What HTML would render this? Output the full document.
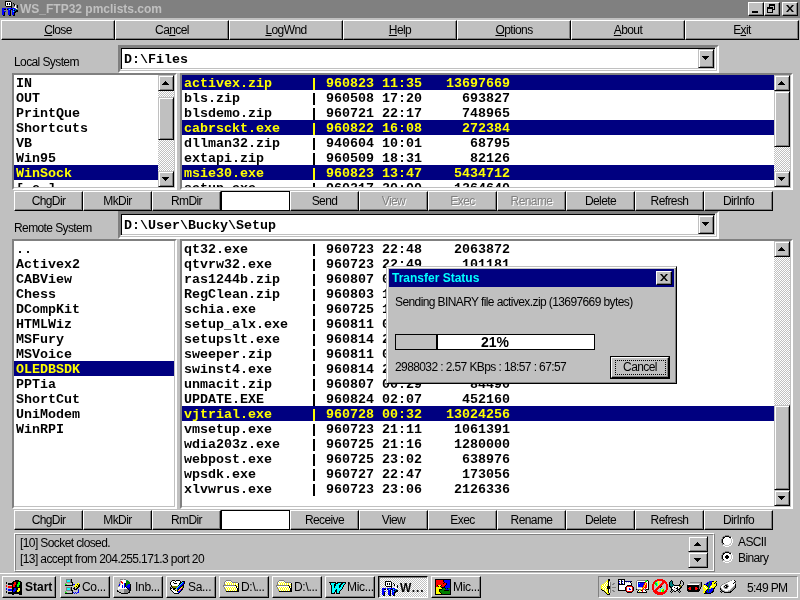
<!DOCTYPE html>
<html><head><meta charset="utf-8"><style>
html,body{margin:0;padding:0}
body{width:800px;height:600px;overflow:hidden;background:#c0c0c0;position:relative;font-family:"Liberation Sans",sans-serif}
div,span,svg{position:absolute;box-sizing:border-box}
.btn{background:#c0c0c0;border-top:1px solid #fff;border-left:1px solid #fff;border-right:1px solid #000;border-bottom:1px solid #000;box-shadow:inset -1px -1px #808080}
.btn span{left:0;right:0;text-align:center;line-height:17px}
.ui{font-size:12px;letter-spacing:-0.6px;color:#000;white-space:nowrap;line-height:16px}
.dis{color:#808080;text-shadow:1px 1px #fff}
.mono{font-family:"Liberation Mono",monospace;font-weight:bold;font-size:13.34px;letter-spacing:0;line-height:15px;padding-top:1px;white-space:pre;color:#000}
.sbtn{background:#c0c0c0;border-top:1px solid #c0c0c0;border-left:1px solid #c0c0c0;border-right:1px solid #000;border-bottom:1px solid #000;box-shadow:inset 1px 1px #fff,inset -1px -1px #808080}
.thumb{background:#c0c0c0;border-top:1px solid #c0c0c0;border-left:1px solid #c0c0c0;border-right:1px solid #000;border-bottom:1px solid #000;box-shadow:inset 1px 1px #fff,inset -1px -1px #808080}
.arr{width:8px;height:4px}
.arr.up{background:linear-gradient(#000,#000) 3px 0/1px 1px no-repeat,linear-gradient(#000,#000) 2px 1px/3px 1px no-repeat,linear-gradient(#000,#000) 1px 2px/5px 1px no-repeat,linear-gradient(#000,#000) 0 3px/7px 1px no-repeat}
.arr.dn{background:linear-gradient(#000,#000) 0 0/7px 1px no-repeat,linear-gradient(#000,#000) 1px 1px/5px 1px no-repeat,linear-gradient(#000,#000) 2px 2px/3px 1px no-repeat,linear-gradient(#000,#000) 3px 3px/1px 1px no-repeat}
u{text-decoration:underline}
</style></head><body>
<div style="left:0;top:0;width:800px;height:600px;background:#c0c0c0;overflow:hidden;will-change:transform">

<div style="left:0px;top:0px;width:800px;height:18px;background:#808080"></div>
<svg style="left:2px;top:1px;" width="16" height="15" viewBox="0 0 16 15" shape-rendering="crispEdges"><path fill="#000" d="M3 0h6v1h-6zM3 1h1v1h-1zM9 1h1v1h-1zM3 2h1v1h-1zM5 2h1v1h-1zM7 2h1v1h-1zM9 2h1v1h-1zM11 2h1v1h-1zM3 3h1v1h-1zM5 3h1v1h-1zM7 3h1v1h-1zM9 3h1v1h-1zM12 3h1v1h-1zM3 4h1v1h-1zM9 4h1v1h-1zM12 4h1v1h-1zM15 4h1v1h-1zM4 5h6v1h-6zM15 5h1v1h-1zM9 6h1v1h-1zM15 6h1v1h-1zM2 8h2v1h-2zM5 8h1v1h-1zM9 8h2v1h-2zM8 9h1v1h-1zM12 9h1v1h-1zM14 9h2v1h-2zM8 10h1v1h-1zM13 10h3v1h-3zM2 11h1v1h-1zM8 11h1v1h-1zM12 11h2v1h-2zM2 12h1v1h-1zM8 12h1v1h-1zM12 12h1v1h-1zM2 13h1v1h-1zM8 13h1v1h-1zM12 13h1v1h-1zM1 14h2v1h-2zM7 14h2v1h-2zM11 14h2v1h-2z"/><path fill="#fff" d="M4 1h5v1h-5zM4 2h1v1h-1zM6 2h1v1h-1zM8 2h1v1h-1zM4 3h1v1h-1zM6 3h1v1h-1zM8 3h1v1h-1zM4 4h5v1h-5zM13 4h1v1h-1zM13 5h1v1h-1zM12 6h2v1h-2zM14 7h1v1h-1z"/><path fill="#00f" d="M0 7h4v1h-4zM5 7h8v1h-8zM0 8h2v1h-2zM6 8h1v1h-1zM8 8h1v1h-1zM12 8h2v1h-2zM0 9h2v1h-2zM6 9h2v1h-2zM10 9h2v1h-2zM0 10h4v1h-4zM6 10h2v1h-2zM10 10h1v1h-1zM12 10h1v1h-1zM0 11h2v1h-2zM6 11h2v1h-2zM10 11h2v1h-2zM0 12h2v1h-2zM6 12h2v1h-2zM10 12h2v1h-2zM0 13h2v1h-2zM6 13h2v1h-2zM10 13h2v1h-2z"/><path fill="#0ff" d="M7 8h1v1h-1zM11 8h1v1h-1zM11 10h1v1h-1z"/><path fill="#008080" d="M14 8h1v1h-1zM13 9h1v1h-1z"/></svg>
<div class="ui" style="left:20px;top:1px;font-weight:bold;letter-spacing:0;color:#c0c0c0">WS_FTP32 pmclists.com</div>
<div class="btn" style="left:748px;top:2px;width:16px;height:14px"></div>
<div class="btn" style="left:764px;top:2px;width:16px;height:14px"></div>
<div class="btn" style="left:782px;top:2px;width:16px;height:14px"></div>
<div style="left:752px;top:11px;width:6px;height:2px;background:#000"></div>
<div style="left:769px;top:4px;width:6px;height:6px;border:1px solid #000;border-top-width:2px"></div>
<div style="left:767px;top:7px;width:6px;height:6px;border:1px solid #000;border-top-width:2px;background:#c0c0c0"></div>
<svg style="left:786px;top:5px" width="8" height="7" viewBox="0 0 8 7"><path d="M0 0h2l2 2.5 2-2.5h2l-3 3.5 3 3.5h-2l-2-2.5-2 2.5h-2l3-3.5z" fill="#000"/></svg>
<div class="btn" style="left:1px;top:20px;width:114px;height:20px">
<span class="ui" style="top:1px"><u>C</u>lose</span>
</div>
<div class="btn" style="left:115px;top:20px;width:114px;height:20px">
<span class="ui" style="top:1px">Ca<u>n</u>cel</span>
</div>
<div class="btn" style="left:229px;top:20px;width:114px;height:20px">
<span class="ui" style="top:1px"><u>L</u>ogWnd</span>
</div>
<div class="btn" style="left:343px;top:20px;width:114px;height:20px">
<span class="ui" style="top:1px"><u>H</u>elp</span>
</div>
<div class="btn" style="left:457px;top:20px;width:114px;height:20px">
<span class="ui" style="top:1px"><u>O</u>ptions</span>
</div>
<div class="btn" style="left:571px;top:20px;width:114px;height:20px">
<span class="ui" style="top:1px"><u>A</u>bout</span>
</div>
<div class="btn" style="left:685px;top:20px;width:114px;height:20px">
<span class="ui" style="top:1px">E<u>x</u>it</span>
</div>
<div class="ui" style="left:14px;top:54px;">Local System</div>
<div class="ui" style="left:14px;top:220px;">Remote System</div>
<div style="left:118px;top:45px;width:601px;height:28px;border-top:2px solid #808080;border-left:2px solid #808080;border-right:2px solid #fff;border-bottom:2px solid #fff;box-shadow:inset -1px -1px #c0c0c0"></div>
<div style="left:120px;top:47px;width:596px;height:23px;background:#fff;border-top:1px solid #808080;border-left:1px solid #808080;border-right:1px solid #fff;border-bottom:1px solid #fff;box-shadow:inset 1px 1px #000,inset -1px -1px #c0c0c0"></div>
<div class="mono" style="left:124px;top:51px;">D:\Files</div>
<div class="sbtn" style="left:698px;top:49px;width:16px;height:19px"><div class="arr dn" style="left:3px;top:6px"></div></div>
<div style="left:12px;top:73px;width:165px;height:117px;background:#fff;border-top:2px solid #808080;border-left:2px solid #808080;border-right:2px solid #fff;border-bottom:2px solid #fff;box-shadow:inset -1px -1px #c0c0c0"></div>
<div style="left:14px;top:75px;width:160px;height:112px;overflow:hidden">
<div class="mono" style="left:2px;top:0px;color:#000">IN</div>
<div class="mono" style="left:2px;top:15px;color:#000">OUT</div>
<div class="mono" style="left:2px;top:30px;color:#000">PrintQue</div>
<div class="mono" style="left:2px;top:45px;color:#000">Shortcuts</div>
<div class="mono" style="left:2px;top:60px;color:#000">VB</div>
<div class="mono" style="left:2px;top:75px;color:#000">Win95</div>
<div style="left:0px;top:90px;width:144px;height:15px;background:#000080"></div>
<div class="mono" style="left:2px;top:90px;color:#ff0">WinSock</div>
<div class="mono" style="left:2px;top:105px;color:#000">[-c-]</div>
</div>
<div style="left:158px;top:91px;width:16px;height:80px;background:conic-gradient(#fff 25%,#c0c0c0 0 50%,#fff 0 75%,#c0c0c0 0) 0 0/2px 2px"></div>
<div class="sbtn" style="left:158px;top:75px;width:16px;height:16px"><div class="arr up" style="left:3px;top:5px"></div></div>
<div class="sbtn" style="left:158px;top:171px;width:16px;height:16px"><div class="arr dn" style="left:3px;top:5px"></div></div>
<div class="thumb" style="left:158px;top:97px;width:16px;height:43px"></div>
<div style="left:180px;top:73px;width:613px;height:117px;background:#fff;border-top:2px solid #808080;border-left:2px solid #808080;border-right:2px solid #fff;border-bottom:2px solid #fff;box-shadow:inset -1px -1px #c0c0c0"></div>
<div style="left:182px;top:75px;width:608px;height:112px;overflow:hidden">
<div style="left:0px;top:0px;width:592px;height:15px;background:#000080"></div>
<div class="mono" style="left:2px;top:0px;color:#ff0">activex.zip</div>
<div style="left:131px;top:3px;width:2px;height:12px;background:#ff0"></div>
<div class="mono" style="left:144px;top:0px;color:#ff0">960823</div>
<div class="mono" style="left:200px;top:0px;color:#ff0">11:35</div>
<div class="mono" style="left:248px;top:0px;color:#ff0;width:80px;text-align:right">13697669</div>
<div class="mono" style="left:2px;top:15px;color:#000">bls.zip</div>
<div style="left:131px;top:18px;width:2px;height:12px;background:#000"></div>
<div class="mono" style="left:144px;top:15px;color:#000">960508</div>
<div class="mono" style="left:200px;top:15px;color:#000">17:20</div>
<div class="mono" style="left:248px;top:15px;color:#000;width:80px;text-align:right">693827</div>
<div class="mono" style="left:2px;top:30px;color:#000">blsdemo.zip</div>
<div style="left:131px;top:33px;width:2px;height:12px;background:#000"></div>
<div class="mono" style="left:144px;top:30px;color:#000">960721</div>
<div class="mono" style="left:200px;top:30px;color:#000">22:17</div>
<div class="mono" style="left:248px;top:30px;color:#000;width:80px;text-align:right">748965</div>
<div style="left:0px;top:45px;width:592px;height:15px;background:#000080"></div>
<div class="mono" style="left:2px;top:45px;color:#ff0">cabrsckt.exe</div>
<div style="left:131px;top:48px;width:2px;height:12px;background:#ff0"></div>
<div class="mono" style="left:144px;top:45px;color:#ff0">960822</div>
<div class="mono" style="left:200px;top:45px;color:#ff0">16:08</div>
<div class="mono" style="left:248px;top:45px;color:#ff0;width:80px;text-align:right">272384</div>
<div class="mono" style="left:2px;top:60px;color:#000">dllman32.zip</div>
<div style="left:131px;top:63px;width:2px;height:12px;background:#000"></div>
<div class="mono" style="left:144px;top:60px;color:#000">940604</div>
<div class="mono" style="left:200px;top:60px;color:#000">10:01</div>
<div class="mono" style="left:248px;top:60px;color:#000;width:80px;text-align:right">68795</div>
<div class="mono" style="left:2px;top:75px;color:#000">extapi.zip</div>
<div style="left:131px;top:78px;width:2px;height:12px;background:#000"></div>
<div class="mono" style="left:144px;top:75px;color:#000">960509</div>
<div class="mono" style="left:200px;top:75px;color:#000">18:31</div>
<div class="mono" style="left:248px;top:75px;color:#000;width:80px;text-align:right">82126</div>
<div style="left:0px;top:90px;width:592px;height:15px;background:#000080"></div>
<div class="mono" style="left:2px;top:90px;color:#ff0">msie30.exe</div>
<div style="left:131px;top:93px;width:2px;height:12px;background:#ff0"></div>
<div class="mono" style="left:144px;top:90px;color:#ff0">960823</div>
<div class="mono" style="left:200px;top:90px;color:#ff0">13:47</div>
<div class="mono" style="left:248px;top:90px;color:#ff0;width:80px;text-align:right">5434712</div>
<div class="mono" style="left:2px;top:105px;color:#000">setup.exe</div>
<div style="left:131px;top:108px;width:2px;height:12px;background:#000"></div>
<div class="mono" style="left:144px;top:105px;color:#000">960217</div>
<div class="mono" style="left:200px;top:105px;color:#000">20:00</div>
<div class="mono" style="left:248px;top:105px;color:#000;width:80px;text-align:right">1264640</div>
</div>
<div style="left:774px;top:91px;width:16px;height:80px;background:conic-gradient(#fff 25%,#c0c0c0 0 50%,#fff 0 75%,#c0c0c0 0) 0 0/2px 2px"></div>
<div class="sbtn" style="left:774px;top:75px;width:16px;height:16px"><div class="arr up" style="left:3px;top:5px"></div></div>
<div class="sbtn" style="left:774px;top:171px;width:16px;height:16px"><div class="arr dn" style="left:3px;top:5px"></div></div>
<div class="thumb" style="left:774px;top:91px;width:16px;height:56px"></div>
<div class="btn" style="left:14px;top:191px;width:69px;height:20px">
<span class="ui" style="top:1px">ChgDir</span>
</div>
<div class="btn" style="left:83px;top:191px;width:69px;height:20px">
<span class="ui" style="top:1px">MkDir</span>
</div>
<div class="btn" style="left:152px;top:191px;width:69px;height:20px">
<span class="ui" style="top:1px">RmDir</span>
</div>
<div style="left:221px;top:191px;width:69px;height:20px;background:#fff;border:1px solid #000"></div>
<div class="btn" style="left:290px;top:191px;width:69px;height:20px">
<span class="ui" style="top:1px">Send</span>
</div>
<div class="btn" style="left:359px;top:191px;width:69px;height:20px">
<span class="ui dis" style="top:1px">View</span>
</div>
<div class="btn" style="left:428px;top:191px;width:69px;height:20px">
<span class="ui dis" style="top:1px">Exec</span>
</div>
<div class="btn" style="left:497px;top:191px;width:69px;height:20px">
<span class="ui dis" style="top:1px">Rename</span>
</div>
<div class="btn" style="left:566px;top:191px;width:69px;height:20px">
<span class="ui" style="top:1px">Delete</span>
</div>
<div class="btn" style="left:635px;top:191px;width:69px;height:20px">
<span class="ui" style="top:1px">Refresh</span>
</div>
<div class="btn" style="left:704px;top:191px;width:69px;height:20px">
<span class="ui" style="top:1px">DirInfo</span>
</div>
<div class="btn" style="left:14px;top:510px;width:69px;height:20px">
<span class="ui" style="top:1px">ChgDir</span>
</div>
<div class="btn" style="left:83px;top:510px;width:69px;height:20px">
<span class="ui" style="top:1px">MkDir</span>
</div>
<div class="btn" style="left:152px;top:510px;width:69px;height:20px">
<span class="ui" style="top:1px">RmDir</span>
</div>
<div style="left:221px;top:510px;width:69px;height:20px;background:#fff;border:1px solid #000"></div>
<div class="btn" style="left:290px;top:510px;width:69px;height:20px">
<span class="ui" style="top:1px">Receive</span>
</div>
<div class="btn" style="left:359px;top:510px;width:69px;height:20px">
<span class="ui" style="top:1px">View</span>
</div>
<div class="btn" style="left:428px;top:510px;width:69px;height:20px">
<span class="ui" style="top:1px">Exec</span>
</div>
<div class="btn" style="left:497px;top:510px;width:69px;height:20px">
<span class="ui" style="top:1px">Rename</span>
</div>
<div class="btn" style="left:566px;top:510px;width:69px;height:20px">
<span class="ui" style="top:1px">Delete</span>
</div>
<div class="btn" style="left:635px;top:510px;width:69px;height:20px">
<span class="ui" style="top:1px">Refresh</span>
</div>
<div class="btn" style="left:704px;top:510px;width:69px;height:20px">
<span class="ui" style="top:1px">DirInfo</span>
</div>
<div style="left:118px;top:211px;width:601px;height:28px;border-top:2px solid #808080;border-left:2px solid #808080;border-right:2px solid #fff;border-bottom:2px solid #fff;box-shadow:inset -1px -1px #c0c0c0"></div>
<div style="left:120px;top:213px;width:596px;height:23px;background:#fff;border-top:1px solid #808080;border-left:1px solid #808080;border-right:1px solid #fff;border-bottom:1px solid #fff;box-shadow:inset 1px 1px #000,inset -1px -1px #c0c0c0"></div>
<div class="mono" style="left:124px;top:217px;">D:\User\Bucky\Setup</div>
<div class="sbtn" style="left:698px;top:215px;width:16px;height:19px"><div class="arr dn" style="left:3px;top:6px"></div></div>
<div style="left:12px;top:239px;width:165px;height:270px;background:#fff;border-top:2px solid #808080;border-left:2px solid #808080;border-right:2px solid #fff;border-bottom:2px solid #fff;box-shadow:inset -1px -1px #c0c0c0"></div>
<div style="left:14px;top:241px;width:160px;height:265px;overflow:hidden">
<div class="mono" style="left:2px;top:0px;color:#000">..</div>
<div class="mono" style="left:2px;top:15px;color:#000">Activex2</div>
<div class="mono" style="left:2px;top:30px;color:#000">CABView</div>
<div class="mono" style="left:2px;top:45px;color:#000">Chess</div>
<div class="mono" style="left:2px;top:60px;color:#000">DCompKit</div>
<div class="mono" style="left:2px;top:75px;color:#000">HTMLWiz</div>
<div class="mono" style="left:2px;top:90px;color:#000">MSFury</div>
<div class="mono" style="left:2px;top:105px;color:#000">MSVoice</div>
<div style="left:0px;top:120px;width:160px;height:15px;background:#000080"></div>
<div class="mono" style="left:2px;top:120px;color:#ff0">OLEDBSDK</div>
<div class="mono" style="left:2px;top:135px;color:#000">PPTia</div>
<div class="mono" style="left:2px;top:150px;color:#000">ShortCut</div>
<div class="mono" style="left:2px;top:165px;color:#000">UniModem</div>
<div class="mono" style="left:2px;top:180px;color:#000">WinRPI</div>
</div>
<div style="left:180px;top:239px;width:613px;height:270px;background:#fff;border-top:2px solid #808080;border-left:2px solid #808080;border-right:2px solid #fff;border-bottom:2px solid #fff;box-shadow:inset -1px -1px #c0c0c0"></div>
<div style="left:182px;top:241px;width:608px;height:265px;overflow:hidden">
<div class="mono" style="left:2px;top:0px;color:#000">qt32.exe</div>
<div style="left:131px;top:3px;width:2px;height:12px;background:#000"></div>
<div class="mono" style="left:144px;top:0px;color:#000">960723</div>
<div class="mono" style="left:200px;top:0px;color:#000">22:48</div>
<div class="mono" style="left:248px;top:0px;color:#000;width:80px;text-align:right">2063872</div>
<div class="mono" style="left:2px;top:15px;color:#000">qtvrw32.exe</div>
<div style="left:131px;top:18px;width:2px;height:12px;background:#000"></div>
<div class="mono" style="left:144px;top:15px;color:#000">960723</div>
<div class="mono" style="left:200px;top:15px;color:#000">22:49</div>
<div class="mono" style="left:248px;top:15px;color:#000;width:80px;text-align:right">101181</div>
<div class="mono" style="left:2px;top:30px;color:#000">ras1244b.zip</div>
<div style="left:131px;top:33px;width:2px;height:12px;background:#000"></div>
<div class="mono" style="left:144px;top:30px;color:#000">960807</div>
<div class="mono" style="left:200px;top:30px;color:#000">09:12</div>
<div class="mono" style="left:248px;top:30px;color:#000;width:80px;text-align:right">211250</div>
<div class="mono" style="left:2px;top:45px;color:#000">RegClean.zip</div>
<div style="left:131px;top:48px;width:2px;height:12px;background:#000"></div>
<div class="mono" style="left:144px;top:45px;color:#000">960803</div>
<div class="mono" style="left:200px;top:45px;color:#000">10:15</div>
<div class="mono" style="left:248px;top:45px;color:#000;width:80px;text-align:right">402210</div>
<div class="mono" style="left:2px;top:60px;color:#000">schia.exe</div>
<div style="left:131px;top:63px;width:2px;height:12px;background:#000"></div>
<div class="mono" style="left:144px;top:60px;color:#000">960725</div>
<div class="mono" style="left:200px;top:60px;color:#000">14:40</div>
<div class="mono" style="left:248px;top:60px;color:#000;width:80px;text-align:right">330105</div>
<div class="mono" style="left:2px;top:75px;color:#000">setup_alx.exe</div>
<div style="left:131px;top:78px;width:2px;height:12px;background:#000"></div>
<div class="mono" style="left:144px;top:75px;color:#000">960811</div>
<div class="mono" style="left:200px;top:75px;color:#000">06:44</div>
<div class="mono" style="left:248px;top:75px;color:#000;width:80px;text-align:right">101930</div>
<div class="mono" style="left:2px;top:90px;color:#000">setupslt.exe</div>
<div style="left:131px;top:93px;width:2px;height:12px;background:#000"></div>
<div class="mono" style="left:144px;top:90px;color:#000">960814</div>
<div class="mono" style="left:200px;top:90px;color:#000">20:13</div>
<div class="mono" style="left:248px;top:90px;color:#000;width:80px;text-align:right">901212</div>
<div class="mono" style="left:2px;top:105px;color:#000">sweeper.zip</div>
<div style="left:131px;top:108px;width:2px;height:12px;background:#000"></div>
<div class="mono" style="left:144px;top:105px;color:#000">960811</div>
<div class="mono" style="left:200px;top:105px;color:#000">07:31</div>
<div class="mono" style="left:248px;top:105px;color:#000;width:80px;text-align:right">51222</div>
<div class="mono" style="left:2px;top:120px;color:#000">swinst4.exe</div>
<div style="left:131px;top:123px;width:2px;height:12px;background:#000"></div>
<div class="mono" style="left:144px;top:120px;color:#000">960814</div>
<div class="mono" style="left:200px;top:120px;color:#000">21:00</div>
<div class="mono" style="left:248px;top:120px;color:#000;width:80px;text-align:right">301440</div>
<div class="mono" style="left:2px;top:135px;color:#000">unmacit.zip</div>
<div style="left:131px;top:138px;width:2px;height:12px;background:#000"></div>
<div class="mono" style="left:144px;top:135px;color:#000">960807</div>
<div class="mono" style="left:200px;top:135px;color:#000">00:29</div>
<div class="mono" style="left:248px;top:135px;color:#000;width:80px;text-align:right">84490</div>
<div class="mono" style="left:2px;top:150px;color:#000">UPDATE.EXE</div>
<div style="left:131px;top:153px;width:2px;height:12px;background:#000"></div>
<div class="mono" style="left:144px;top:150px;color:#000">960824</div>
<div class="mono" style="left:200px;top:150px;color:#000">02:07</div>
<div class="mono" style="left:248px;top:150px;color:#000;width:80px;text-align:right">452160</div>
<div style="left:0px;top:165px;width:592px;height:15px;background:#000080"></div>
<div class="mono" style="left:2px;top:165px;color:#ff0">vjtrial.exe</div>
<div style="left:131px;top:168px;width:2px;height:12px;background:#ff0"></div>
<div class="mono" style="left:144px;top:165px;color:#ff0">960728</div>
<div class="mono" style="left:200px;top:165px;color:#ff0">00:32</div>
<div class="mono" style="left:248px;top:165px;color:#ff0;width:80px;text-align:right">13024256</div>
<div class="mono" style="left:2px;top:180px;color:#000">vmsetup.exe</div>
<div style="left:131px;top:183px;width:2px;height:12px;background:#000"></div>
<div class="mono" style="left:144px;top:180px;color:#000">960723</div>
<div class="mono" style="left:200px;top:180px;color:#000">21:11</div>
<div class="mono" style="left:248px;top:180px;color:#000;width:80px;text-align:right">1061391</div>
<div class="mono" style="left:2px;top:195px;color:#000">wdia203z.exe</div>
<div style="left:131px;top:198px;width:2px;height:12px;background:#000"></div>
<div class="mono" style="left:144px;top:195px;color:#000">960725</div>
<div class="mono" style="left:200px;top:195px;color:#000">21:16</div>
<div class="mono" style="left:248px;top:195px;color:#000;width:80px;text-align:right">1280000</div>
<div class="mono" style="left:2px;top:210px;color:#000">webpost.exe</div>
<div style="left:131px;top:213px;width:2px;height:12px;background:#000"></div>
<div class="mono" style="left:144px;top:210px;color:#000">960725</div>
<div class="mono" style="left:200px;top:210px;color:#000">23:02</div>
<div class="mono" style="left:248px;top:210px;color:#000;width:80px;text-align:right">638976</div>
<div class="mono" style="left:2px;top:225px;color:#000">wpsdk.exe</div>
<div style="left:131px;top:228px;width:2px;height:12px;background:#000"></div>
<div class="mono" style="left:144px;top:225px;color:#000">960727</div>
<div class="mono" style="left:200px;top:225px;color:#000">22:47</div>
<div class="mono" style="left:248px;top:225px;color:#000;width:80px;text-align:right">173056</div>
<div class="mono" style="left:2px;top:240px;color:#000">xlvwrus.exe</div>
<div style="left:131px;top:243px;width:2px;height:12px;background:#000"></div>
<div class="mono" style="left:144px;top:240px;color:#000">960723</div>
<div class="mono" style="left:200px;top:240px;color:#000">23:06</div>
<div class="mono" style="left:248px;top:240px;color:#000;width:80px;text-align:right">2126336</div>
</div>
<div style="left:774px;top:257px;width:16px;height:233px;background:conic-gradient(#fff 25%,#c0c0c0 0 50%,#fff 0 75%,#c0c0c0 0) 0 0/2px 2px"></div>
<div class="sbtn" style="left:774px;top:241px;width:16px;height:16px"><div class="arr up" style="left:3px;top:5px"></div></div>
<div class="sbtn" style="left:774px;top:490px;width:16px;height:16px"><div class="arr dn" style="left:3px;top:5px"></div></div>
<div class="thumb" style="left:774px;top:405px;width:16px;height:85px"></div>
<div style="left:14px;top:533px;width:701px;height:39px;border-top:1px solid #fff;border-left:1px solid #fff;border-right:1px solid #808080;border-bottom:1px solid #808080"></div>
<div style="left:15px;top:534px;width:699px;height:37px;border-top:1px solid #808080;border-left:1px solid #808080;border-right:1px solid #fff;border-bottom:1px solid #fff"></div>
<div class="ui" style="left:20px;top:535px;">[10] Socket closed.</div>
<div class="ui" style="left:20px;top:551px;">[13] accept from 204.255.171.3 port 20</div>
<div class="sbtn" style="left:688px;top:536px;width:20px;height:16px"><div class="arr up" style="left:5px;top:5px"></div></div>
<div class="sbtn" style="left:688px;top:552px;width:20px;height:16px"><div class="arr dn" style="left:5px;top:5px"></div></div>
<svg style="left:721px;top:535px" width="12" height="12" viewBox="0 0 12 12" shape-rendering="crispEdges"><path fill="#808080" d="M4 0h4v1h-4zM2 1h2v1h-2zM8 1h2v1h-2zM1 2h1v2h-1zM0 4h1v4h-1zM1 8h1v2h-1z"/><path fill="#fff" d="M10 2h1v2h-1zM11 4h1v4h-1zM10 8h1v2h-1zM8 10h2v1h-2zM2 10h2v1h-2zM4 11h4v1h-4z"/><path fill="#000" d="M4 1h4v1h-4zM2 2h2v1h-2zM8 2h2v1h-2zM2 3h1v1h-1zM1 4h1v4h-1zM2 8h1v1h-1z"/><path fill="#c0c0c0" d="M9 3h1v1h-1zM10 4h1v4h-1zM9 8h1v1h-1zM8 9h2v1h-2zM2 9h2v1h-2zM4 10h4v1h-4z"/><path fill="#fff" d="M4 2h4v1h-4zM3 3h6v1h-6zM2 4h8v4h-8zM3 8h6v1h-6zM4 9h4v1h-4z"/></svg>
<div class="ui" style="left:738px;top:534px;">ASCII</div>
<svg style="left:721px;top:551px" width="12" height="12" viewBox="0 0 12 12" shape-rendering="crispEdges"><path fill="#808080" d="M4 0h4v1h-4zM2 1h2v1h-2zM8 1h2v1h-2zM1 2h1v2h-1zM0 4h1v4h-1zM1 8h1v2h-1z"/><path fill="#fff" d="M10 2h1v2h-1zM11 4h1v4h-1zM10 8h1v2h-1zM8 10h2v1h-2zM2 10h2v1h-2zM4 11h4v1h-4z"/><path fill="#000" d="M4 1h4v1h-4zM2 2h2v1h-2zM8 2h2v1h-2zM2 3h1v1h-1zM1 4h1v4h-1zM2 8h1v1h-1z"/><path fill="#c0c0c0" d="M9 3h1v1h-1zM10 4h1v4h-1zM9 8h1v1h-1zM8 9h2v1h-2zM2 9h2v1h-2zM4 10h4v1h-4z"/><path fill="#fff" d="M4 2h4v1h-4zM3 3h6v1h-6zM2 4h8v4h-8zM3 8h6v1h-6zM4 9h4v1h-4z"/><path fill="#000" d="M5 4h2v1h-2zM4 5h4v2h-4zM5 7h2v1h-2z"/></svg>
<div class="ui" style="left:738px;top:550px;">Binary</div>
<div style="left:0px;top:572px;width:800px;height:1px;background:#c0c0c0"></div>
<div style="left:0px;top:573px;width:800px;height:1px;background:#fff"></div>
<div style="left:0px;top:574px;width:800px;height:26px;background:#c0c0c0"></div>
<div class="btn" style="left:2px;top:576px;width:54px;height:22px"></div>
<div class="ui" style="left:25px;top:579px;font-weight:bold;letter-spacing:0">Start</div>
<svg style="left:5px;top:580px;" width="17" height="15" viewBox="0 0 17 15" shape-rendering="crispEdges"><path fill="#000" d="M10 0h4v1h-4zM8 1h8v1h-8zM1 2h1v1h-1zM7 2h2v1h-2zM11 2h2v1h-2zM15 2h2v1h-2zM1 3h1v1h-1zM3 3h6v1h-6zM11 3h2v1h-2zM15 3h2v1h-2zM3 4h5v1h-5zM11 4h1v1h-1zM15 4h2v1h-2zM7 5h1v1h-1zM10 5h2v1h-2zM14 5h3v1h-3zM7 6h1v1h-1zM10 6h2v1h-2zM14 6h3v1h-3zM7 7h10v1h-10zM7 8h2v1h-2zM11 8h2v1h-2zM15 8h2v1h-2zM7 9h2v1h-2zM11 9h2v1h-2zM15 9h2v1h-2zM7 10h1v1h-1zM11 10h1v1h-1zM15 10h2v1h-2zM1 11h1v1h-1zM7 11h1v1h-1zM10 11h2v1h-2zM14 11h3v1h-3zM1 12h1v1h-1zM3 12h14v1h-14zM3 13h14v1h-14zM7 14h2v1h-2zM14 14h3v1h-3z"/><path fill="#f00" d="M9 2h2v1h-2zM9 3h2v1h-2zM8 4h3v1h-3zM1 5h1v1h-1zM8 5h2v1h-2zM1 6h1v1h-1zM3 6h4v1h-4zM8 6h2v1h-2zM3 7h4v1h-4z"/><path fill="#0f0" d="M13 2h2v1h-2zM13 3h2v1h-2zM12 4h3v1h-3zM12 5h2v1h-2zM12 6h2v1h-2z"/><path fill="#00f" d="M1 8h1v1h-1zM9 8h2v1h-2zM1 9h1v1h-1zM3 9h4v1h-4zM9 9h2v1h-2zM3 10h4v1h-4zM8 10h3v1h-3zM8 11h2v1h-2z"/><path fill="#ff0" d="M13 8h2v1h-2zM13 9h2v1h-2zM12 10h3v1h-3zM12 11h2v1h-2z"/></svg>
<div class="btn" style="left:60px;top:576px;width:50px;height:22px"></div>
<div class="ui" style="left:82px;top:579px;letter-spacing:-0.3px">Co...</div>
<div class="btn" style="left:113px;top:576px;width:50px;height:22px"></div>
<div class="ui" style="left:135px;top:579px;letter-spacing:-0.3px">Inb...</div>
<div class="btn" style="left:166px;top:576px;width:50px;height:22px"></div>
<div class="ui" style="left:188px;top:579px;letter-spacing:-0.3px">Sa...</div>
<div class="btn" style="left:219px;top:576px;width:50px;height:22px"></div>
<div class="ui" style="left:241px;top:579px;letter-spacing:-0.3px">D:\...</div>
<div class="btn" style="left:272px;top:576px;width:50px;height:22px"></div>
<div class="ui" style="left:294px;top:579px;letter-spacing:-0.3px">D:\...</div>
<div class="btn" style="left:325px;top:576px;width:50px;height:22px"></div>
<div class="ui" style="left:347px;top:579px;letter-spacing:-0.3px">Mic...</div>
<div style="left:378px;top:576px;width:50px;height:22px;border-top:1px solid #000;border-left:1px solid #000;border-right:1px solid #fff;border-bottom:1px solid #fff;box-shadow:inset 1px 1px #808080;background:conic-gradient(#fff 25%,#c0c0c0 0 50%,#fff 0 75%,#c0c0c0 0) 0 0/2px 2px"></div>
<div class="ui" style="left:400px;top:580px;font-weight:bold;letter-spacing:1px">W...</div>
<div class="btn" style="left:431px;top:576px;width:50px;height:22px"></div>
<div class="ui" style="left:453px;top:579px;letter-spacing:-0.3px">Mic...</div>
<svg style="left:64px;top:579px;" width="16" height="15" viewBox="0 0 16 15" shape-rendering="crispEdges"><path fill="#808080" d="M2 0h5v1h-5zM2 1h1v1h-1zM6 1h1v1h-1zM2 2h1v1h-1zM6 2h1v1h-1zM2 3h5v1h-5zM1 4h1v1h-1zM2 8h5v1h-5zM2 9h1v1h-1zM6 9h1v1h-1zM2 10h1v1h-1zM6 10h1v1h-1zM2 11h5v1h-5zM1 12h1v1h-1z"/><path fill="#000" d="M7 0h1v1h-1zM7 1h1v1h-1zM7 2h1v1h-1zM7 3h2v1h-2zM8 4h1v1h-1zM8 5h1v1h-1zM13 5h1v1h-1zM15 5h1v1h-1zM1 6h8v1h-8zM14 6h2v1h-2zM12 7h1v1h-1zM14 7h2v1h-2zM7 8h1v1h-1zM10 8h1v1h-1zM13 8h2v1h-2zM7 9h1v1h-1zM9 9h2v1h-2zM12 9h2v1h-2zM7 10h1v1h-1zM10 10h3v1h-3zM7 11h2v1h-2zM8 12h1v1h-1zM8 13h1v1h-1zM1 14h8v1h-8z"/><path fill="#0ff" d="M3 1h3v1h-3zM3 2h3v1h-3zM3 9h3v1h-3zM3 10h3v1h-3z"/><path fill="#c0c0c0" d="M2 4h6v1h-6zM3 5h5v1h-5zM11 8h1v1h-1zM2 12h6v1h-6zM3 13h5v1h-5z"/><path fill="#ff0" d="M13 4h2v1h-2zM11 5h2v1h-2zM14 5h1v1h-1zM11 6h3v1h-3zM10 7h2v1h-2zM13 7h1v1h-1zM12 8h1v1h-1z"/><path fill="#0f0" d="M1 5h2v1h-2zM1 13h2v1h-2z"/><path fill="#00f" d="M9 5h2v1h-2zM14 10h1v1h-1zM14 11h1v1h-1zM14 12h1v1h-1zM9 13h1v1h-1zM11 13h1v1h-1zM13 13h2v1h-2zM10 14h1v1h-1zM12 14h1v1h-1z"/></svg>
<svg style="left:117px;top:579px;" width="16" height="15" viewBox="0 0 16 15" shape-rendering="crispEdges"><path fill="#808080" d="M3 0h3v1h-3zM7 0h2v1h-2zM3 2h1v1h-1zM2 3h1v1h-1zM2 4h1v1h-1zM1 6h1v1h-1zM1 7h1v1h-1zM7 10h4v1h-4zM7 11h5v1h-5zM7 12h5v1h-5zM7 13h4v1h-4z"/><path fill="#c0c0c0" d="M3 1h1v1h-1zM3 3h1v1h-1zM3 4h1v1h-1zM1 5h1v1h-1zM3 5h1v1h-1zM2 7h1v1h-1zM0 9h1v1h-1zM0 10h1v1h-1zM2 10h5v1h-5zM1 11h6v1h-6zM2 12h5v1h-5zM4 13h3v1h-3z"/><path fill="#fff" d="M4 1h5v1h-5zM5 2h4v1h-4zM6 3h3v1h-3zM4 4h1v1h-1zM6 4h1v1h-1zM4 5h3v1h-3zM3 6h2v1h-2zM6 6h1v1h-1zM3 7h2v1h-2zM6 7h1v1h-1zM1 8h4v1h-4zM6 8h1v1h-1zM8 8h1v1h-1zM1 9h9v1h-9zM1 10h1v1h-1z"/><path fill="#008080" d="M9 1h2v1h-2z"/><path fill="#f00" d="M4 2h1v1h-1zM4 3h2v1h-2zM5 4h1v1h-1z"/><path fill="#008000" d="M9 2h3v1h-3zM9 3h4v1h-4zM9 4h4v1h-4zM9 5h2v1h-2zM9 6h1v1h-1z"/><path fill="#00f" d="M7 4h1v1h-1zM2 5h1v1h-1zM7 5h1v1h-1zM11 5h2v1h-2zM2 6h1v1h-1zM5 6h1v1h-1zM7 6h1v1h-1zM10 6h3v1h-3zM5 7h1v1h-1zM7 7h1v1h-1zM9 7h4v1h-4zM5 8h1v1h-1zM7 8h1v1h-1zM10 8h2v1h-2z"/><path fill="#000" d="M8 4h1v1h-1zM8 5h1v1h-1zM13 5h1v1h-1zM8 6h1v1h-1zM13 6h1v1h-1zM8 7h1v1h-1zM13 7h1v1h-1zM9 8h1v1h-1zM13 8h1v1h-1zM10 9h1v1h-1zM13 9h1v1h-1zM11 10h1v1h-1zM13 10h1v1h-1zM0 11h1v1h-1zM12 11h2v1h-2zM0 12h2v1h-2zM12 12h1v1h-1zM2 13h2v1h-2zM11 13h2v1h-2zM4 14h7v1h-7z"/><path fill="#000080" d="M12 8h1v1h-1zM11 9h2v1h-2zM12 10h1v1h-1z"/></svg>
<svg style="left:170px;top:580px;" width="16" height="14" viewBox="0 0 16 14" shape-rendering="crispEdges"><path fill="#000" d="M2 0h3v1h-3zM6 0h4v1h-4zM1 1h1v1h-1zM5 1h1v1h-1zM10 1h1v1h-1zM12 1h3v1h-3zM0 2h1v1h-1zM3 2h1v1h-1zM10 2h2v1h-2zM14 2h1v1h-1zM0 3h1v1h-1zM4 3h3v1h-3zM9 3h2v1h-2zM14 3h1v1h-1zM0 4h1v1h-1zM9 4h1v1h-1zM13 4h1v1h-1zM1 5h1v1h-1zM8 5h1v1h-1zM12 5h2v1h-2zM1 6h1v1h-1zM11 6h1v1h-1zM13 6h1v1h-1zM0 7h1v1h-1zM2 7h1v1h-1zM10 7h1v1h-1zM13 7h1v1h-1zM0 8h2v1h-2zM3 8h3v1h-3zM9 8h1v1h-1zM12 8h1v1h-1zM0 9h1v1h-1zM3 9h2v1h-2zM8 9h1v1h-1zM11 9h2v1h-2zM1 10h1v1h-1zM5 10h1v1h-1zM7 10h1v1h-1zM11 10h1v1h-1zM2 11h1v1h-1zM7 11h1v1h-1zM10 11h1v1h-1zM3 12h1v1h-1zM9 12h1v1h-1zM4 13h5v1h-5z"/><path fill="#fff" d="M2 1h3v1h-3zM6 1h4v1h-4zM1 2h2v1h-2zM4 2h6v1h-6zM1 3h3v1h-3zM7 3h2v1h-2zM1 4h8v1h-8zM2 5h6v1h-6zM1 9h2v1h-2zM2 10h3v1h-3zM3 11h4v1h-4zM4 12h4v1h-4z"/><path fill="#0ff" d="M12 2h1v1h-1zM11 3h1v1h-1zM10 4h1v1h-1zM9 5h1v1h-1zM8 6h1v1h-1zM7 7h1v1h-1zM6 8h1v1h-1z"/><path fill="#00f" d="M13 2h1v1h-1zM12 3h2v1h-2zM11 4h2v1h-2zM10 5h2v1h-2zM9 6h2v1h-2zM8 7h2v1h-2zM7 8h2v1h-2zM7 9h1v1h-1zM10 10h1v1h-1zM8 11h2v1h-2zM8 12h1v1h-1z"/><path fill="#808000" d="M2 6h6v1h-6zM12 6h1v1h-1zM3 7h4v1h-4zM12 7h1v1h-1z"/><path fill="#ff0" d="M11 7h1v1h-1zM10 8h1v1h-1zM6 9h1v1h-1zM9 9h1v1h-1zM6 10h1v1h-1zM8 10h1v1h-1z"/><path fill="#f0f" d="M11 8h1v1h-1zM10 9h1v1h-1zM9 10h1v1h-1z"/></svg>
<svg style="left:223px;top:580px;" width="17" height="12" viewBox="0 0 17 12" shape-rendering="crispEdges"><path fill="#808080" d="M3 0h5v1h-5zM2 1h1v1h-1zM8 1h1v1h-1zM1 2h1v1h-1zM9 2h6v1h-6zM1 3h1v1h-1zM1 4h1v1h-1zM0 5h12v1h-12zM0 6h1v1h-1zM1 7h1v1h-1zM1 8h1v1h-1zM2 9h1v1h-1zM2 10h1v1h-1z"/><path fill="#fff" d="M3 1h5v1h-5zM2 2h1v1h-1zM4 2h1v1h-1zM6 2h1v1h-1zM8 2h1v1h-1zM2 3h2v1h-2zM5 3h1v1h-1zM7 3h1v1h-1zM9 3h1v1h-1zM11 3h1v1h-1zM13 3h2v1h-2zM3 4h1v1h-1zM5 4h1v1h-1zM7 4h1v1h-1zM9 4h1v1h-1zM11 4h1v1h-1zM13 4h1v1h-1zM14 5h1v1h-1zM1 6h12v1h-12zM2 7h1v1h-1zM4 7h1v1h-1zM6 7h1v1h-1zM8 7h1v1h-1zM10 7h1v1h-1zM12 7h1v1h-1zM14 7h1v1h-1zM3 8h1v1h-1zM5 8h1v1h-1zM7 8h1v1h-1zM9 8h1v1h-1zM11 8h1v1h-1zM13 8h1v1h-1zM3 9h1v1h-1zM5 9h1v1h-1zM7 9h1v1h-1zM9 9h1v1h-1zM11 9h1v1h-1zM13 9h1v1h-1zM4 10h1v1h-1zM6 10h1v1h-1zM8 10h1v1h-1zM10 10h1v1h-1zM12 10h1v1h-1z"/><path fill="#ff0" d="M3 2h1v1h-1zM5 2h1v1h-1zM7 2h1v1h-1zM4 3h1v1h-1zM6 3h1v1h-1zM8 3h1v1h-1zM10 3h1v1h-1zM12 3h1v1h-1zM2 4h1v1h-1zM4 4h1v1h-1zM6 4h1v1h-1zM8 4h1v1h-1zM10 4h1v1h-1zM12 4h1v1h-1zM14 4h1v1h-1zM13 5h1v1h-1zM14 6h1v1h-1zM3 7h1v1h-1zM5 7h1v1h-1zM7 7h1v1h-1zM9 7h1v1h-1zM11 7h1v1h-1zM2 8h1v1h-1zM4 8h1v1h-1zM6 8h1v1h-1zM8 8h1v1h-1zM10 8h1v1h-1zM12 8h1v1h-1zM4 9h1v1h-1zM6 9h1v1h-1zM8 9h1v1h-1zM10 9h1v1h-1zM12 9h1v1h-1zM3 10h1v1h-1zM5 10h1v1h-1zM7 10h1v1h-1zM9 10h1v1h-1zM11 10h1v1h-1zM13 10h1v1h-1z"/><path fill="#000" d="M15 3h1v1h-1zM15 4h1v1h-1zM12 5h1v1h-1zM15 5h1v1h-1zM13 6h1v1h-1zM15 6h1v1h-1zM13 7h1v1h-1zM15 7h1v1h-1zM14 8h2v1h-2zM14 9h2v1h-2zM14 10h2v1h-2zM3 11h13v1h-13z"/></svg>
<svg style="left:276px;top:580px;" width="17" height="12" viewBox="0 0 17 12" shape-rendering="crispEdges"><path fill="#808080" d="M3 0h5v1h-5zM2 1h1v1h-1zM8 1h1v1h-1zM1 2h1v1h-1zM9 2h6v1h-6zM1 3h1v1h-1zM1 4h1v1h-1zM0 5h12v1h-12zM0 6h1v1h-1zM1 7h1v1h-1zM1 8h1v1h-1zM2 9h1v1h-1zM2 10h1v1h-1z"/><path fill="#fff" d="M3 1h5v1h-5zM2 2h1v1h-1zM4 2h1v1h-1zM6 2h1v1h-1zM8 2h1v1h-1zM2 3h2v1h-2zM5 3h1v1h-1zM7 3h1v1h-1zM9 3h1v1h-1zM11 3h1v1h-1zM13 3h2v1h-2zM3 4h1v1h-1zM5 4h1v1h-1zM7 4h1v1h-1zM9 4h1v1h-1zM11 4h1v1h-1zM13 4h1v1h-1zM14 5h1v1h-1zM1 6h12v1h-12zM2 7h1v1h-1zM4 7h1v1h-1zM6 7h1v1h-1zM8 7h1v1h-1zM10 7h1v1h-1zM12 7h1v1h-1zM14 7h1v1h-1zM3 8h1v1h-1zM5 8h1v1h-1zM7 8h1v1h-1zM9 8h1v1h-1zM11 8h1v1h-1zM13 8h1v1h-1zM3 9h1v1h-1zM5 9h1v1h-1zM7 9h1v1h-1zM9 9h1v1h-1zM11 9h1v1h-1zM13 9h1v1h-1zM4 10h1v1h-1zM6 10h1v1h-1zM8 10h1v1h-1zM10 10h1v1h-1zM12 10h1v1h-1z"/><path fill="#ff0" d="M3 2h1v1h-1zM5 2h1v1h-1zM7 2h1v1h-1zM4 3h1v1h-1zM6 3h1v1h-1zM8 3h1v1h-1zM10 3h1v1h-1zM12 3h1v1h-1zM2 4h1v1h-1zM4 4h1v1h-1zM6 4h1v1h-1zM8 4h1v1h-1zM10 4h1v1h-1zM12 4h1v1h-1zM14 4h1v1h-1zM13 5h1v1h-1zM14 6h1v1h-1zM3 7h1v1h-1zM5 7h1v1h-1zM7 7h1v1h-1zM9 7h1v1h-1zM11 7h1v1h-1zM2 8h1v1h-1zM4 8h1v1h-1zM6 8h1v1h-1zM8 8h1v1h-1zM10 8h1v1h-1zM12 8h1v1h-1zM4 9h1v1h-1zM6 9h1v1h-1zM8 9h1v1h-1zM10 9h1v1h-1zM12 9h1v1h-1zM3 10h1v1h-1zM5 10h1v1h-1zM7 10h1v1h-1zM9 10h1v1h-1zM11 10h1v1h-1zM13 10h1v1h-1z"/><path fill="#000" d="M15 3h1v1h-1zM15 4h1v1h-1zM12 5h1v1h-1zM15 5h1v1h-1zM13 6h1v1h-1zM15 6h1v1h-1zM13 7h1v1h-1zM15 7h1v1h-1zM14 8h2v1h-2zM14 9h2v1h-2zM14 10h2v1h-2zM3 11h13v1h-13z"/></svg>
<svg style="left:329px;top:582px;" width="17" height="12" viewBox="0 0 17 12" shape-rendering="crispEdges"><path fill="#000" d="M0 0h7v1h-7zM8 0h9v1h-9zM1 1h1v1h-1zM6 1h3v1h-3zM12 1h2v1h-2zM16 1h1v1h-1zM1 2h1v1h-1zM5 2h2v1h-2zM11 2h2v1h-2zM15 2h1v1h-1zM2 3h1v1h-1zM5 3h2v1h-2zM10 3h2v1h-2zM14 3h1v1h-1zM2 4h1v1h-1zM5 4h1v1h-1zM10 4h2v1h-2zM14 4h1v1h-1zM2 5h1v1h-1zM5 5h1v1h-1zM10 5h1v1h-1zM13 5h1v1h-1zM2 6h1v1h-1zM13 6h1v1h-1zM2 7h1v1h-1zM7 7h1v1h-1zM12 7h1v1h-1zM2 8h1v1h-1zM6 8h2v1h-2zM11 8h1v1h-1zM2 9h1v1h-1zM6 9h2v1h-2zM10 9h1v1h-1zM2 10h1v1h-1zM5 10h1v1h-1zM7 10h1v1h-1zM10 10h1v1h-1zM2 11h4v1h-4zM7 11h4v1h-4z"/><path fill="#0ff" d="M2 1h4v1h-4zM9 1h3v1h-3zM14 1h2v1h-2zM2 2h3v1h-3zM7 2h4v1h-4zM13 2h2v1h-2zM3 3h2v1h-2zM7 3h3v1h-3zM12 3h2v1h-2zM3 4h2v1h-2zM6 4h4v1h-4zM12 4h2v1h-2zM3 5h2v1h-2zM6 5h4v1h-4zM11 5h2v1h-2zM3 6h10v1h-10zM3 7h4v1h-4zM8 7h4v1h-4zM3 8h3v1h-3zM8 8h3v1h-3zM3 9h3v1h-3zM8 9h2v1h-2zM3 10h2v1h-2zM8 10h2v1h-2z"/></svg>
<svg style="left:382px;top:581px;" width="16" height="15" viewBox="0 0 16 15" shape-rendering="crispEdges"><path fill="#000" d="M3 0h6v1h-6zM3 1h1v1h-1zM9 1h1v1h-1zM3 2h1v1h-1zM5 2h1v1h-1zM7 2h1v1h-1zM9 2h1v1h-1zM11 2h1v1h-1zM3 3h1v1h-1zM5 3h1v1h-1zM7 3h1v1h-1zM9 3h1v1h-1zM12 3h1v1h-1zM3 4h1v1h-1zM9 4h1v1h-1zM12 4h1v1h-1zM15 4h1v1h-1zM4 5h6v1h-6zM15 5h1v1h-1zM9 6h1v1h-1zM15 6h1v1h-1zM2 8h2v1h-2zM5 8h1v1h-1zM9 8h2v1h-2zM8 9h1v1h-1zM12 9h1v1h-1zM14 9h2v1h-2zM8 10h1v1h-1zM13 10h3v1h-3zM2 11h1v1h-1zM8 11h1v1h-1zM12 11h2v1h-2zM2 12h1v1h-1zM8 12h1v1h-1zM12 12h1v1h-1zM2 13h1v1h-1zM8 13h1v1h-1zM12 13h1v1h-1zM1 14h2v1h-2zM7 14h2v1h-2zM11 14h2v1h-2z"/><path fill="#fff" d="M4 1h5v1h-5zM4 2h1v1h-1zM6 2h1v1h-1zM8 2h1v1h-1zM4 3h1v1h-1zM6 3h1v1h-1zM8 3h1v1h-1zM4 4h5v1h-5zM13 4h1v1h-1zM13 5h1v1h-1zM12 6h2v1h-2zM14 7h1v1h-1z"/><path fill="#00f" d="M0 7h4v1h-4zM5 7h8v1h-8zM0 8h2v1h-2zM6 8h1v1h-1zM8 8h1v1h-1zM12 8h2v1h-2zM0 9h2v1h-2zM6 9h2v1h-2zM10 9h2v1h-2zM0 10h4v1h-4zM6 10h2v1h-2zM10 10h1v1h-1zM12 10h1v1h-1zM0 11h2v1h-2zM6 11h2v1h-2zM10 11h2v1h-2zM0 12h2v1h-2zM6 12h2v1h-2zM10 12h2v1h-2zM0 13h2v1h-2zM6 13h2v1h-2zM10 13h2v1h-2z"/><path fill="#0ff" d="M7 8h1v1h-1zM11 8h1v1h-1zM11 10h1v1h-1z"/><path fill="#008080" d="M14 8h1v1h-1zM13 9h1v1h-1z"/></svg>
<svg style="left:435px;top:579px;" width="16" height="16" viewBox="0 0 16 16" shape-rendering="crispEdges"><path fill="#000" d="M0 0h16v1h-16zM0 1h1v1h-1zM8 1h1v1h-1zM15 1h1v1h-1zM0 2h1v1h-1zM8 2h1v1h-1zM15 2h1v1h-1zM0 3h1v1h-1zM9 3h1v1h-1zM15 3h1v1h-1zM0 4h1v1h-1zM8 4h1v1h-1zM11 4h1v1h-1zM15 4h1v1h-1zM0 5h1v1h-1zM11 5h1v1h-1zM15 5h1v1h-1zM0 6h1v1h-1zM2 6h1v1h-1zM6 6h1v1h-1zM10 6h1v1h-1zM15 6h1v1h-1zM0 7h1v1h-1zM3 7h1v1h-1zM5 7h1v1h-1zM9 7h1v1h-1zM15 7h1v1h-1zM0 8h1v1h-1zM6 8h4v1h-4zM15 8h1v1h-1zM0 9h1v1h-1zM7 9h1v1h-1zM10 9h1v1h-1zM12 9h1v1h-1zM15 9h1v1h-1zM0 10h1v1h-1zM4 10h3v1h-3zM15 10h1v1h-1zM0 11h1v1h-1zM4 11h1v1h-1zM9 11h5v1h-5zM15 11h1v1h-1zM0 12h1v1h-1zM4 12h1v1h-1zM15 12h1v1h-1zM0 13h1v1h-1zM5 13h1v1h-1zM15 13h1v1h-1zM0 14h1v1h-1zM6 14h1v1h-1zM15 14h1v1h-1zM0 15h16v1h-16z"/><path fill="#f00" d="M1 1h7v1h-7zM1 2h7v1h-7zM1 3h8v1h-8zM1 4h7v1h-7zM9 4h2v1h-2zM1 5h10v1h-10zM1 6h1v1h-1zM7 6h3v1h-3zM1 7h2v1h-2zM6 7h3v1h-3z"/><path fill="#00f" d="M9 1h6v1h-6zM9 2h6v1h-6zM10 3h5v1h-5zM12 4h3v1h-3zM12 5h3v1h-3zM11 6h4v1h-4zM10 7h5v1h-5zM10 8h5v1h-5zM11 9h1v1h-1zM11 10h3v1h-3z"/><path fill="#ff0" d="M3 6h3v1h-3zM4 7h1v1h-1zM1 8h5v1h-5zM1 9h6v1h-6zM1 10h3v1h-3zM1 11h3v1h-3zM1 12h3v1h-3zM1 13h4v1h-4zM1 14h5v1h-5z"/><path fill="#008000" d="M8 9h2v1h-2zM13 9h2v1h-2zM7 10h4v1h-4zM14 10h1v1h-1zM5 11h4v1h-4zM14 11h1v1h-1zM5 12h10v1h-10zM6 13h9v1h-9zM7 14h8v1h-8z"/></svg>
<div style="left:598px;top:576px;width:200px;height:22px;border-top:1px solid #808080;border-left:1px solid #808080;border-right:1px solid #fff;border-bottom:1px solid #fff"></div>
<div class="ui" style="left:747px;top:580px;">5:49 PM</div>
<svg style="left:600px;top:579px;" width="16" height="16" viewBox="0 0 16 16" shape-rendering="crispEdges"><path fill="#000" d="M8 0h2v1h-2zM8 1h2v1h-2zM8 2h1v1h-1zM8 3h1v1h-1zM8 4h1v1h-1zM8 5h1v1h-1zM8 6h1v1h-1zM7 7h3v1h-3zM7 8h3v1h-3zM7 9h3v1h-3zM1 10h1v1h-1zM8 10h1v1h-1zM2 11h2v1h-2zM8 11h1v1h-1zM4 12h1v1h-1zM8 12h1v1h-1zM5 13h1v1h-1zM8 13h1v1h-1zM6 14h1v1h-1zM9 14h1v1h-1zM7 15h3v1h-3z"/><path fill="#ff0" d="M7 1h1v1h-1zM6 2h2v1h-2zM5 3h1v1h-1zM7 3h1v1h-1zM4 4h1v1h-1zM6 4h1v1h-1zM2 5h2v1h-2zM5 5h1v1h-1zM7 5h1v1h-1zM1 6h1v1h-1zM3 6h1v1h-1zM5 6h1v1h-1zM7 6h1v1h-1zM1 7h2v1h-2zM4 7h1v1h-1zM6 7h1v1h-1zM1 8h1v1h-1zM3 8h1v1h-1zM5 8h1v1h-1zM1 9h2v1h-2zM4 9h1v1h-1zM6 9h1v1h-1zM2 10h1v1h-1zM4 10h1v1h-1zM6 10h2v1h-2zM4 11h1v1h-1zM6 11h2v1h-2zM5 12h1v1h-1zM7 12h1v1h-1zM6 13h2v1h-2zM7 14h2v1h-2z"/><path fill="#fff" d="M6 3h1v1h-1zM9 3h1v1h-1zM5 4h1v1h-1zM7 4h1v1h-1zM9 4h1v1h-1zM4 5h1v1h-1zM6 5h1v1h-1zM9 5h1v1h-1zM2 6h1v1h-1zM4 6h1v1h-1zM6 6h1v1h-1zM9 6h1v1h-1zM3 7h1v1h-1zM5 7h1v1h-1zM2 8h1v1h-1zM4 8h1v1h-1zM6 8h1v1h-1zM3 9h1v1h-1zM5 9h1v1h-1zM3 10h1v1h-1zM5 10h1v1h-1zM9 10h1v1h-1zM5 11h1v1h-1zM9 11h1v1h-1zM6 12h1v1h-1zM9 12h1v1h-1zM9 13h1v1h-1z"/><path fill="#808080" d="M10 3h1v1h-1zM10 4h1v1h-1zM13 4h2v1h-2zM10 5h1v1h-1zM12 5h2v1h-2zM10 6h1v1h-1zM10 7h1v1h-1zM10 8h1v1h-1zM12 8h4v1h-4zM10 9h1v1h-1zM10 10h1v1h-1zM10 11h1v1h-1zM12 11h2v1h-2zM10 12h1v1h-1zM13 12h2v1h-2zM10 13h1v1h-1z"/></svg>
<svg style="left:618px;top:579px;" width="16" height="14" viewBox="0 0 16 14" shape-rendering="crispEdges"><path fill="#000" d="M0 0h7v1h-7zM0 1h1v1h-1zM3 1h1v1h-1zM6 1h1v1h-1zM0 2h1v1h-1zM3 2h1v1h-1zM6 2h1v1h-1zM13 2h1v1h-1zM0 3h1v1h-1zM3 3h1v1h-1zM6 3h1v1h-1zM12 3h1v1h-1zM0 4h1v1h-1zM3 4h1v1h-1zM6 4h1v1h-1zM13 4h1v1h-1zM0 5h7v1h-7zM13 5h1v1h-1zM0 6h1v1h-1zM9 6h5v1h-5zM0 7h1v1h-1zM8 7h1v1h-1zM14 7h1v1h-1zM0 8h1v1h-1zM7 8h1v1h-1zM15 8h1v1h-1zM0 9h1v1h-1zM7 9h1v1h-1zM15 9h1v1h-1zM0 10h1v1h-1zM7 10h1v1h-1zM15 10h1v1h-1zM0 11h8v1h-8zM15 11h1v1h-1zM8 12h1v1h-1zM14 12h1v1h-1zM9 13h5v1h-5z"/><path fill="#fff" d="M1 1h2v1h-2zM4 1h2v1h-2zM2 2h1v1h-1zM5 2h1v1h-1zM1 3h2v1h-2zM4 3h2v1h-2zM7 3h1v1h-1zM9 3h1v1h-1zM11 3h1v1h-1zM2 4h1v1h-1zM5 4h1v1h-1zM7 4h6v1h-6zM7 5h6v1h-6zM1 6h8v1h-8zM1 7h7v1h-7zM1 8h6v1h-6zM9 8h5v1h-5zM1 9h6v1h-6zM9 9h2v1h-2zM12 9h2v1h-2zM1 10h6v1h-6zM9 10h2v1h-2zM13 10h1v1h-1zM9 11h5v1h-5z"/><path fill="#00f" d="M1 2h1v1h-1zM4 2h1v1h-1zM1 4h1v1h-1zM4 4h1v1h-1zM11 9h1v1h-1zM11 10h2v1h-2z"/><path fill="#000080" d="M7 2h6v1h-6z"/><path fill="#c0c0c0" d="M8 3h1v1h-1zM10 3h1v1h-1z"/><path fill="#f00" d="M9 7h5v1h-5zM8 8h1v1h-1zM14 8h1v1h-1zM8 9h1v1h-1zM14 9h1v1h-1zM8 10h1v1h-1zM14 10h1v1h-1zM8 11h1v1h-1zM14 11h1v1h-1zM9 12h5v1h-5z"/></svg>
<svg style="left:636px;top:580px;" width="16" height="13" viewBox="0 0 16 13" shape-rendering="crispEdges"><path fill="#808080" d="M1 0h9v1h-9zM12 0h1v1h-1zM0 1h1v1h-1zM0 2h1v1h-1zM0 3h1v1h-1zM0 4h1v1h-1zM0 5h1v1h-1zM0 6h1v1h-1zM0 7h1v1h-1zM0 8h1v1h-1zM1 9h4v1h-4zM7 9h3v1h-3z"/><path fill="#0f0" d="M10 0h1v1h-1zM9 1h2v1h-2z"/><path fill="#000" d="M11 0h1v1h-1zM12 1h1v1h-1zM12 2h1v1h-1zM12 3h1v1h-1zM12 4h1v1h-1zM12 5h1v1h-1zM12 6h1v1h-1zM12 7h1v1h-1zM12 8h1v1h-1zM0 9h1v1h-1zM10 9h3v1h-3zM2 10h1v1h-1zM5 10h1v1h-1zM9 10h1v1h-1zM1 11h1v1h-1zM10 11h1v1h-1zM1 12h10v1h-10z"/><path fill="#fff" d="M1 1h8v1h-8zM11 1h1v1h-1zM1 2h1v1h-1zM10 2h2v1h-2zM1 3h1v1h-1zM11 3h1v1h-1zM1 4h1v1h-1zM11 4h1v1h-1zM1 5h1v1h-1zM11 5h1v1h-1zM1 6h1v1h-1zM11 6h1v1h-1zM1 7h1v1h-1zM11 7h1v1h-1zM1 8h5v1h-5zM8 8h1v1h-1zM10 8h2v1h-2zM3 10h1v1h-1zM7 10h2v1h-2zM2 11h1v1h-1zM4 11h2v1h-2zM7 11h3v1h-3z"/><path fill="#000080" d="M2 2h7v1h-7z"/><path fill="#f00" d="M9 2h1v1h-1zM8 3h1v1h-1zM10 3h1v1h-1zM8 4h1v1h-1zM10 4h1v1h-1zM7 5h1v1h-1zM9 5h2v1h-2zM7 6h1v1h-1zM9 6h2v1h-2zM6 7h1v1h-1zM8 7h3v1h-3zM7 8h1v1h-1zM9 8h1v1h-1zM6 9h1v1h-1zM6 10h1v1h-1zM6 11h1v1h-1z"/><path fill="#00f" d="M2 3h1v1h-1zM4 3h4v1h-4zM2 4h6v1h-6zM2 5h5v1h-5zM2 6h5v1h-5z"/><path fill="#0ff" d="M3 3h1v1h-1z"/><path fill="#ff0" d="M9 3h1v1h-1zM9 4h1v1h-1zM8 5h1v1h-1zM8 6h1v1h-1zM7 7h1v1h-1zM6 8h1v1h-1zM5 9h1v1h-1zM4 10h1v1h-1zM3 11h1v1h-1z"/><path fill="#c0c0c0" d="M2 7h4v1h-4z"/></svg>
<svg style="left:652px;top:579px;" width="16" height="16" viewBox="0 0 16 16" shape-rendering="crispEdges"><path fill="#f00" d="M5 0h6v1h-6zM3 1h10v1h-10zM2 2h3v1h-3zM10 2h4v1h-4zM1 3h2v1h-2zM10 3h5v1h-5zM1 4h2v1h-2zM9 4h3v1h-3zM13 4h2v1h-2zM0 5h2v1h-2zM8 5h3v1h-3zM14 5h2v1h-2zM0 6h2v1h-2zM7 6h3v1h-3zM14 6h2v1h-2zM0 7h2v1h-2zM6 7h3v1h-3zM14 7h2v1h-2zM0 8h2v1h-2zM5 8h3v1h-3zM14 8h2v1h-2zM0 9h2v1h-2zM4 9h3v1h-3zM14 9h2v1h-2zM0 10h2v1h-2zM3 10h3v1h-3zM14 10h2v1h-2zM1 11h4v1h-4zM13 11h2v1h-2zM1 12h5v1h-5zM12 12h3v1h-3zM2 13h12v1h-12zM3 14h10v1h-10zM5 15h6v1h-6z"/><path fill="#0ff" d="M5 2h1v1h-1zM4 3h1v1h-1zM5 4h1v1h-1zM5 5h1v1h-1zM5 6h1v1h-1zM9 9h2v1h-2zM8 10h1v1h-1zM8 11h1v1h-1zM8 12h1v1h-1z"/><path fill="#ff0" d="M6 2h2v1h-2zM5 3h2v1h-2zM6 4h1v1h-1zM6 5h1v1h-1zM6 6h1v1h-1zM11 9h1v1h-1zM9 10h2v1h-2zM9 11h1v1h-1zM9 12h1v1h-1z"/><path fill="#c0c0c0" d="M8 2h2v1h-2zM7 3h3v1h-3zM7 4h2v1h-2zM12 4h1v1h-1zM2 5h1v1h-1zM7 5h1v1h-1zM11 5h3v1h-3zM2 6h2v1h-2zM10 6h4v1h-4zM2 7h4v1h-4zM10 7h4v1h-4zM2 8h3v1h-3zM9 8h5v1h-5zM2 9h2v1h-2zM7 9h2v1h-2zM12 9h2v1h-2zM2 10h1v1h-1zM6 10h2v1h-2zM12 10h2v1h-2zM5 11h3v1h-3zM12 11h1v1h-1zM6 12h2v1h-2z"/><path fill="#0f0" d="M3 3h1v1h-1zM3 4h2v1h-2zM3 5h2v1h-2zM4 6h1v1h-1zM11 10h1v1h-1zM10 11h2v1h-2zM10 12h2v1h-2z"/><path fill="#000" d="M9 7h1v1h-1zM8 8h1v1h-1z"/></svg>
<svg style="left:669px;top:580px;" width="16" height="13" viewBox="0 0 16 13" shape-rendering="crispEdges"><path fill="#000" d="M2 0h1v1h-1zM12 0h1v1h-1zM1 1h1v1h-1zM3 1h1v1h-1zM11 1h1v1h-1zM13 1h1v1h-1zM0 2h1v1h-1zM3 2h1v1h-1zM11 2h1v1h-1zM14 2h1v1h-1zM0 3h1v1h-1zM3 3h1v1h-1zM11 3h1v1h-1zM14 3h1v1h-1zM0 4h1v1h-1zM4 4h1v1h-1zM10 4h1v1h-1zM14 4h1v1h-1zM0 5h1v1h-1zM5 5h6v1h-6zM13 5h1v1h-1zM0 6h2v1h-2zM3 6h1v1h-1zM12 6h1v1h-1zM1 7h2v1h-2zM5 7h1v1h-1zM8 7h1v1h-1zM11 7h2v1h-2zM2 8h1v1h-1zM7 8h2v1h-2zM10 8h2v1h-2zM2 9h2v1h-2zM8 9h3v1h-3zM2 10h1v1h-1zM4 10h1v1h-1zM7 10h2v1h-2zM10 10h1v1h-1zM1 11h1v1h-1zM3 11h1v1h-1zM5 11h2v1h-2zM9 11h1v1h-1zM11 11h1v1h-1zM2 12h1v1h-1zM10 12h1v1h-1z"/><path fill="#008080" d="M2 1h1v1h-1zM1 2h2v1h-2zM1 3h2v1h-2zM1 4h3v1h-3zM1 5h4v1h-4zM2 6h1v1h-1z"/><path fill="#808000" d="M11 5h1v1h-1zM10 6h2v1h-2z"/><path fill="#fff" d="M4 6h6v1h-6zM3 7h2v1h-2zM6 7h2v1h-2zM9 7h2v1h-2zM3 8h3v1h-3zM9 8h1v1h-1zM4 9h1v1h-1zM6 9h2v1h-2zM6 10h1v1h-1z"/><path fill="#c0c0c0" d="M6 8h1v1h-1zM5 9h1v1h-1zM5 10h1v1h-1z"/></svg>
<svg style="left:686px;top:582px;" width="16" height="10" viewBox="0 0 16 10" shape-rendering="crispEdges"><path fill="#808080" d="M4 0h11v1h-11zM14 1h1v1h-1zM13 2h2v1h-2zM13 3h2v1h-2zM13 4h2v1h-2zM13 5h1v1h-1zM13 6h1v1h-1z"/><path fill="#000" d="M15 0h1v1h-1zM15 1h1v1h-1zM15 2h1v1h-1zM1 3h12v1h-12zM15 3h1v1h-1zM1 4h12v1h-12zM15 4h1v1h-1zM1 5h2v1h-2zM5 5h4v1h-4zM11 5h2v1h-2zM14 5h1v1h-1zM1 6h1v1h-1zM5 6h4v1h-4zM12 6h1v1h-1zM14 6h1v1h-1zM1 7h2v1h-2zM5 7h4v1h-4zM11 7h3v1h-3zM1 8h13v1h-13zM2 9h11v1h-11z"/><path fill="#c0c0c0" d="M3 1h11v1h-11z"/><path fill="#fff" d="M2 2h11v1h-11z"/><path fill="#f00" d="M3 5h2v1h-2zM9 5h2v1h-2zM2 6h3v1h-3zM9 6h3v1h-3zM3 7h2v1h-2zM9 7h2v1h-2z"/></svg>
<svg style="left:702px;top:581px;" width="16" height="13" viewBox="0 0 16 13" shape-rendering="crispEdges"><path fill="#00f" d="M7 0h3v1h-3zM5 1h2v1h-2zM8 1h2v1h-2zM4 2h1v1h-1zM6 2h1v1h-1zM8 2h1v1h-1zM3 3h3v1h-3zM8 3h2v1h-2zM5 4h1v1h-1zM7 4h2v1h-2zM7 5h1v1h-1zM7 6h1v1h-1zM9 7h2v1h-2zM7 8h4v1h-4zM5 9h1v1h-1zM7 9h4v1h-4zM4 10h2v1h-2zM7 10h3v1h-3zM5 11h4v1h-4z"/><path fill="#000" d="M10 0h2v1h-2zM14 0h1v1h-1zM13 1h1v1h-1zM5 2h1v1h-1zM9 2h1v1h-1zM12 2h1v1h-1zM14 2h1v1h-1zM2 3h1v1h-1zM14 3h1v1h-1zM4 4h1v1h-1zM14 4h1v1h-1zM5 5h1v1h-1zM13 5h1v1h-1zM12 6h1v1h-1zM11 7h2v1h-2zM5 8h1v1h-1zM11 8h1v1h-1zM4 9h1v1h-1zM11 9h1v1h-1zM3 10h1v1h-1zM10 10h2v1h-2zM3 11h2v1h-2zM9 11h2v1h-2zM2 12h7v1h-7z"/><path fill="#ff0" d="M12 0h2v1h-2zM10 1h3v1h-3zM10 2h2v1h-2zM10 3h4v1h-4zM1 4h3v1h-3zM9 4h5v1h-5zM1 5h1v1h-1zM3 5h2v1h-2zM8 5h1v1h-1zM10 5h3v1h-3zM1 6h2v1h-2zM4 6h2v1h-2zM8 6h4v1h-4zM1 7h3v1h-3zM5 7h1v1h-1zM7 7h2v1h-2zM1 8h4v1h-4zM2 9h2v1h-2zM1 10h2v1h-2zM1 11h2v1h-2z"/><path fill="#008000" d="M7 1h1v1h-1zM7 2h1v1h-1zM6 3h2v1h-2zM6 4h1v1h-1zM6 5h1v1h-1zM6 6h1v1h-1zM6 7h1v1h-1zM6 8h1v1h-1zM6 9h1v1h-1zM6 10h1v1h-1z"/><path fill="#fff" d="M2 5h1v1h-1zM9 5h1v1h-1zM3 6h1v1h-1zM4 7h1v1h-1z"/></svg>
<svg style="left:720px;top:580px;" width="16" height="13" viewBox="0 0 16 13" shape-rendering="crispEdges"><path fill="#808080" d="M11 0h1v1h-1zM8 1h1v1h-1zM6 2h1v1h-1zM15 2h1v1h-1zM4 3h1v1h-1zM15 3h1v1h-1zM2 4h1v1h-1zM6 4h2v1h-2zM1 5h1v1h-1zM7 5h1v1h-1zM0 6h1v1h-1zM8 6h1v1h-1zM14 6h1v1h-1zM0 7h1v1h-1zM4 7h1v1h-1zM7 7h1v1h-1zM13 7h2v1h-2zM5 8h2v1h-2zM12 8h2v1h-2zM1 9h1v1h-1zM11 9h2v1h-2zM2 10h1v1h-1zM10 10h2v1h-2zM1 11h1v1h-1zM4 11h1v1h-1zM8 11h2v1h-2z"/><path fill="#fff" d="M12 0h2v1h-2zM10 1h5v1h-5zM8 2h6v1h-6zM6 3h7v1h-7zM14 3h1v1h-1zM4 4h1v1h-1zM8 4h7v1h-7zM2 5h2v1h-2zM9 5h5v1h-5zM1 6h2v1h-2zM5 6h1v1h-1zM9 6h4v1h-4zM1 7h2v1h-2zM8 7h4v1h-4zM2 8h2v1h-2zM8 8h3v1h-3zM3 9h7v1h-7zM5 10h3v1h-3z"/><path fill="#000" d="M14 0h1v1h-1zM15 1h1v1h-1zM14 2h1v1h-1zM13 3h1v1h-1zM15 4h1v1h-1zM5 5h2v1h-2zM15 5h1v1h-1zM4 6h1v1h-1zM6 6h2v1h-2zM15 6h1v1h-1zM5 7h2v1h-2zM15 7h1v1h-1zM0 8h1v1h-1zM14 8h1v1h-1zM0 9h1v1h-1zM13 9h1v1h-1zM1 10h1v1h-1zM12 10h1v1h-1zM0 11h1v1h-1zM2 11h2v1h-2zM10 11h2v1h-2zM1 12h1v1h-1zM4 12h7v1h-7z"/><path fill="#c0c0c0" d="M9 1h1v1h-1zM7 2h1v1h-1zM5 3h1v1h-1zM3 4h1v1h-1zM5 4h1v1h-1zM4 5h1v1h-1zM8 5h1v1h-1zM14 5h1v1h-1zM3 6h1v1h-1zM13 6h1v1h-1zM3 7h1v1h-1zM12 7h1v1h-1zM1 8h1v1h-1zM4 8h1v1h-1zM7 8h1v1h-1zM11 8h1v1h-1zM2 9h1v1h-1zM10 9h1v1h-1zM3 10h2v1h-2zM8 10h2v1h-2zM5 11h3v1h-3z"/></svg>
<div style="left:386px;top:266px;width:291px;height:118px;background:#c0c0c0;border-top:1px solid #c0c0c0;border-left:1px solid #c0c0c0;border-right:1px solid #000;border-bottom:1px solid #000;box-shadow:inset 1px 1px #fff,inset -1px -1px #808080"></div>
<div style="left:389px;top:269px;width:285px;height:18px;background:#000080"></div>
<div class="ui" style="left:392px;top:270px;font-weight:bold;letter-spacing:0;color:#0ff">Transfer Status</div>
<div class="btn" style="left:656px;top:271px;width:16px;height:14px"></div>
<svg style="left:660px;top:274px" width="8" height="7" viewBox="0 0 8 7"><path d="M0 0h2l2 2.5 2-2.5h2l-3 3.5 3 3.5h-2l-2-2.5-2 2.5h-2l3-3.5z" fill="#000"/></svg>
<div class="ui" style="left:395px;top:294px;">Sending BINARY file activex.zip (13697669 bytes)</div>
<div style="left:395px;top:334px;width:200px;height:16px;background:#fff;border:1px solid #000"></div>
<div style="left:395px;top:334px;width:43px;height:16px;background:#c0c0c0;border:1px solid #000;border-right-width:2px"></div>
<div class="ui" style="left:395px;top:334px;width:200px;text-align:center;font-weight:bold;letter-spacing:0;font-size:14px;line-height:16px">21%</div>
<div class="ui" style="left:395px;top:359px;">2988032 : 2.57 KBps : 18:57 : 67:57</div>
<div style="left:610px;top:356px;width:60px;height:23px;border:1px solid #000"></div>
<div class="btn" style="left:611px;top:357px;width:58px;height:21px">
<span class="ui" style="top:1px">Cancel</span>
</div>
<div style="left:615px;top:360px;width:51px;height:15px;border:1px dotted #000"></div>
</div></body></html>
